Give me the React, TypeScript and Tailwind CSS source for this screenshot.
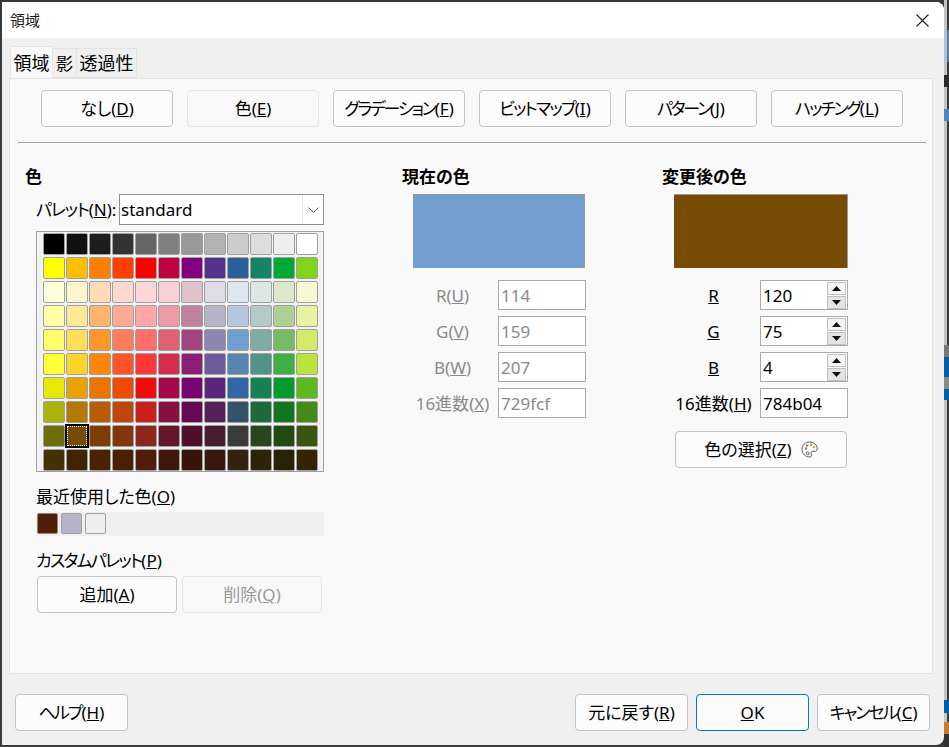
import React from "react";

const PALETTE: string[][] = [
  ["#000000", "#111111", "#1c1c1c", "#333333", "#666666", "#808080", "#999999", "#b2b2b2", "#cccccc", "#dddddd", "#eeeeee", "#ffffff"],
  ["#ffff00", "#ffbf00", "#ff8000", "#ff4000", "#ff0000", "#bf0041", "#800080", "#55308d", "#2a6099", "#158466", "#00a933", "#81d41a"],
  ["#ffffd7", "#fff5ce", "#ffdbb6", "#ffd8ce", "#ffd7d7", "#f7d1d5", "#e0c2cd", "#dedce6", "#dee6ef", "#dee7e5", "#dde8cb", "#f6f9d4"],
  ["#ffffa6", "#ffe994", "#ffb66c", "#ffaa95", "#ffa6a6", "#ec9ba4", "#bf819e", "#b7b3ca", "#b4c7dc", "#b3cac7", "#afd095", "#e8f2a1"],
  ["#ffff6d", "#ffde59", "#ff972f", "#ff7b59", "#ff6d6d", "#e16173", "#a1467e", "#8e86ae", "#729fcf", "#81aca6", "#77bc65", "#d4ea6b"],
  ["#ffff38", "#ffd428", "#ff860d", "#ff5429", "#ff3838", "#d62e4e", "#8d1d75", "#6e5b9b", "#5983b0", "#50938a", "#3faf46", "#bbe33d"],
  ["#e6e905", "#e8a202", "#ea7500", "#ed4c05", "#f10d0c", "#a7074b", "#780373", "#5b277d", "#3465a4", "#168253", "#069a2e", "#5eb91e"],
  ["#acb20c", "#b47804", "#b85c00", "#be480a", "#c9211e", "#861141", "#650953", "#55215b", "#355269", "#1e6a39", "#127622", "#468a1a"],
  ["#706e0c", "#784b04", "#7b3d00", "#813709", "#8d281e", "#611729", "#4e102d", "#481d32", "#383d3c", "#28471f", "#224b12", "#395511"],
  ["#443205", "#3f2402", "#4a2200", "#4b2002", "#511d0a", "#3e160c", "#38120c", "#38180e", "#33220f", "#2c2408", "#2a2206", "#332504"],
];

const SLIVER: { h: number; cls: string }[] = [
  { h: 30, cls: "bg-[#c4c4c4] border-r-2 border-[#3c3c3c]" },
  { h: 32, cls: "bg-[#a8c4e0] border-r-2 border-[#6a7a8a]" },
  { h: 13, cls: "bg-[#c4c4c4] border-r-2 border-[#3c3c3c]" },
  { h: 12, cls: "bg-[#2a2a2a]" },
  { h: 22, cls: "bg-[#c4c4c4] border-r-2 border-[#3c3c3c]" },
  { h: 12, cls: "bg-[#4f86c0]" },
  { h: 224, cls: "bg-[#c4c4c4] border-r-2 border-[#3c3c3c]" },
  { h: 12, cls: "bg-[#777777]" },
  { h: 20, cls: "bg-[#005fa8]" },
  { h: 12, cls: "bg-[#8a8a8a]" },
  { h: 11, cls: "bg-[#005fa8]" },
  { h: 300, cls: "bg-[#c4c4c4] border-r-2 border-[#3c3c3c]" },
  { h: 13, cls: "bg-[#005fa8]" },
  { h: 9, cls: "bg-[#c4c4c4] border-r-2 border-[#3c3c3c]" },
  { h: 12, cls: "bg-[#c08030]" },
  { h: 13, cls: "bg-[#333333]" },
];

function Label({ text, k, after = "", track = "" }: { text: string; k: string; after?: string; track?: string }) {
  return (
    <span className="whitespace-nowrap">
      <span className={track}>{text}</span>(<u>{k}</u>){after}
    </span>
  );
}

function Btn({
  className = "",
  disabled = false,
  pressed = false,
  focused = false,
  children,
}: {
  className?: string;
  disabled?: boolean;
  pressed?: boolean;
  focused?: boolean;
  children: React.ReactNode;
}) {
  const look = focused
    ? "bg-[#fbfbfb] border-[#0078d4] text-black"
    : disabled
      ? "bg-[#f8f8f8] border-[#e5e5e5] text-[#9a9a9a]"
      : pressed
        ? "bg-[#f8f8f8] border-[#e5e5e5] text-black"
        : "bg-[#fcfcfc] border-[#c4c4c4] text-black";
  return (
    <div className={`flex h-[37px] shrink-0 items-center justify-center rounded-[4px] border text-[17px] leading-none ${look} ${className}`}>
      {children}
    </div>
  );
}

function Heading({ children, className = "" }: { children: React.ReactNode; className?: string }) {
  return <div className={`h-[24px] text-[17px] font-bold leading-[24px] text-black ${className}`}>{children}</div>;
}

function Field({ value, disabled = false, spin = false }: { value: string; disabled?: boolean; spin?: boolean }) {
  return (
    <div className={`flex h-[30px] w-[88px] items-center justify-between border border-[#aaaaaa] bg-white pl-[2px] text-[17px] leading-none ${disabled ? "text-[#8a8a8a]" : "text-black"}`}>
      <span>{value}</span>
      {spin && (
        <div className="mr-[1px] flex w-[19px] flex-col gap-[1px]">
          <div className="flex h-[13px] items-center justify-center border border-[#c0c0c0] bg-[#f4f4f4]">
            <svg width="9" height="5" viewBox="0 0 9 5"><path d="M4.5 0 9 5H0z" fill="#111" /></svg>
          </div>
          <div className="flex h-[13px] items-center justify-center border border-[#c0c0c0] bg-[#e4e4e4]">
            <svg width="9" height="5" viewBox="0 0 9 5"><path d="M0 0h9L4.500 5z" fill="#111" /></svg>
          </div>
        </div>
      )}
    </div>
  );
}

function FieldRow({ label, value, disabled = false, spin = false, gapClass }: { label: React.ReactNode; value: string; disabled?: boolean; spin?: boolean; gapClass: string }) {
  return (
    <div className={`flex h-[30px] items-center ${gapClass}`}>
      <div className={`w-[79px] text-center text-[17px] leading-none ${disabled ? "text-[#8a8a8a]" : "text-black"}`}>{label}</div>
      <Field value={value} disabled={disabled} spin={spin} />
    </div>
  );
}

function Swatch({ color, selected = false }: { color: string; selected?: boolean }) {
  return (
    <div className="relative h-[22px] w-[22px] rounded-[2px] border border-[#a0a0a0]" style={{ backgroundColor: color }}>
      {selected && (
        <div className="absolute -inset-[2px] border border-black bg-black p-[1px]">
          <div className="h-full w-full border border-dotted border-white" style={{ backgroundColor: color, outline: "1px solid black", outlineOffset: "0px" }} />
        </div>
      )}
    </div>
  );
}

function PaletteIcon() {
  return (
    <svg width="17" height="17" viewBox="0 0 17 17" fill="none">
      <path d="M8.500 1C4.200 1 1 4.200 1 8.300c0 4.200 3.300 7.700 7.400 7.700 1.500 0 2.300-.9 2.300-1.900 0-1.100-.7-1.500-.7-2.400 0-.9.7-1.400 1.700-1.400h2.100c1.500 0 2.400-1 2.400-2.500C16.200 3.900 12.800 1 8.500 1z" stroke="#555" strokeWidth="1" fill="#fff" />
      <circle cx="5" cy="7.500" r="1.300" fill="#3aa0e0" />
      <circle cx="6.200" cy="4.500" r="1.300" fill="#e8605c" />
      <circle cx="10" cy="3.800" r="1.300" fill="#5cc08a" />
      <circle cx="13" cy="6.300" r="1.300" fill="#f0a840" />
      <circle cx="6.700" cy="12.300" r="1.400" stroke="#555" strokeWidth="1" />
    </svg>
  );
}

export default function App() {
  return (
    <div className="flex h-[747px] w-[949px] overflow-hidden bg-[#3a3a3a] font-['Noto_Sans','Noto_Sans_CJK_JP',sans-serif] [font-feature-settings:'palt']">
      <div className="w-[2px] shrink-0 bg-[#3a3a3a]" />
      <div className="flex w-[942px] shrink-0 flex-col">
        <div className="h-[2px] shrink-0 bg-[#3a3a3a]" />
        <div className="flex h-[743px] flex-col overflow-hidden rounded-tr-[8px] rounded-br-[8px] bg-[#f0f0f0]">
          {/* Title bar */}
          <div className="flex h-[36px] shrink-0 items-center justify-between bg-white pl-[8px] pr-[15px]">
            <span className="text-[15px] leading-none text-[#1a1a1a]">領域</span>
            <svg width="13" height="13" viewBox="0 0 13 13" stroke="#222" strokeWidth="1.100">
              <path d="M.500.500l12 12M12.500.500l-12 12" />
            </svg>
          </div>

          {/* Tabs */}
          <div className="box-content flex h-[32px] shrink-0 items-end pl-[8px] pt-[8px]">
            <div className="flex h-[32px] w-[43px] items-center justify-center rounded-t-[2px] border border-b-0 border-[#e3e3e3] bg-[#f9f9f9] text-[18px] leading-none text-black">領域</div>
            <div className="flex h-[30px] w-[24px] items-center justify-center border-y border-r border-[#e3e3e3] text-[17px] leading-none text-black">影</div>
            <div className="flex h-[30px] w-[60px] items-center justify-center border-y border-r border-[#e3e3e3] text-[18px] leading-none text-black">透過性</div>
          </div>

          {/* Panel */}
          <div className="ml-[7px] flex h-[596px] w-[924px] shrink-0 flex-col border border-[#e3e3e3] bg-[#f9f9f9]">
            <div className="mt-[11px] flex gap-[14px] pl-[31px]">
              <Btn className="w-[132px]"><Label text="なし" k="D" /></Btn>
              <Btn className="w-[132px]" pressed><Label text="色" k="E" /></Btn>
              <Btn className="w-[132px]"><Label text="グラデーション" k="F" track="tracking-[-2.200px]" /></Btn>
              <Btn className="w-[132px]"><Label text="ビットマップ" k="I" track="tracking-[-1.800px]" /></Btn>
              <Btn className="w-[132px]"><Label text="パターン" k="J" track="tracking-[-2.200px]" /></Btn>
              <Btn className="w-[132px]"><Label text="ハッチング" k="L" track="tracking-[-2.200px]" /></Btn>
            </div>
            <div className="ml-[8px] mt-[15px] h-px w-[908px] shrink-0 bg-[#a0a0a0]" />

            <div className="mt-[22px] flex pl-[15px]">
              {/* Left column */}
              <div className="w-[377px] shrink-0">
                <Heading>色</Heading>
                <div className="ml-[11px] mt-[5px] flex h-[31px] w-[288px] items-center justify-between">
                  <span className="w-[83px] shrink-0 text-[17px] leading-none text-black"><Label text="パレット" k="N" after=":" track="tracking-[-1.200px]" /></span>
                  <div className="flex h-[31px] w-[205px] shrink-0 items-center border border-[#8f8f8f] bg-white">
                    <span className="flex-1 pl-[1px] text-[17px] leading-none text-black">standard</span>
                    <div className="flex h-full w-[21px] items-center justify-center border-l border-[#e3e3e3]">
                      <svg width="11" height="6" viewBox="0 0 11 6" fill="none" stroke="#555" strokeWidth="1"><path d="M.500.500l5 5 5-5" /></svg>
                    </div>
                  </div>
                </div>

                <div className="ml-[11px] mt-[6px] flex h-[241px] w-[288px] flex-col gap-[2px] border border-[#a0a0a0] bg-[#f2f2f2] pl-[6px] pt-[1px]">
                  {PALETTE.map((row, r) => (
                    <div key={r} className="flex gap-[1px]">
                      {row.map((c, i) => (
                        <Swatch key={i} color={c} selected={r === 8 && i === 1} />
                      ))}
                    </div>
                  ))}
                </div>

                <div className="ml-[11px] mt-[13px] h-[24px] text-[17px] leading-[24px] text-black"><Label text="最近使用した色" k="O" /></div>
                <div className="ml-[11px] mt-[3px] flex h-[24px] w-[288px] gap-[3px] bg-[#efefef] pl-[1px] pt-[1px]">
                  <div className="h-[21px] w-[21px] rounded-[2px] border border-[#a08070] bg-[#4f1f0b]" />
                  <div className="h-[21px] w-[21px] rounded-[2px] border border-[#a0a0a0] bg-[#b7b3ca]" />
                  <div className="h-[21px] w-[21px] rounded-[2px] border border-[#a0a0a0] bg-[#eeeeee]" />
                </div>

                <div className="ml-[11px] mt-[13px] h-[24px] text-[17px] leading-[24px] text-black"><Label text="カスタムパレット" k="P" track="tracking-[-1.750px]" /></div>
                <div className="ml-[12px] mt-[3px] flex gap-[5px]">
                  <Btn className="w-[140px]"><Label text="追加" k="A" /></Btn>
                  <Btn className="w-[140px]" disabled><Label text="削除" k="Q" /></Btn>
                </div>
              </div>

              {/* Middle column */}
              <div className="w-[260px] shrink-0">
                <Heading>現在の色</Heading>
                <div className="ml-[11px] mt-[5px] h-[74px] w-[172px] border-r border-t border-[#999999] bg-[#729fcf]" />
                <div className="ml-[11px] mt-[12px] flex flex-col gap-[6px]">
                  <FieldRow gapClass="gap-[6px]" label={<Label text="R" k="U" />} value="114" disabled />
                  <FieldRow gapClass="gap-[6px]" label={<Label text="G" k="V" />} value="159" disabled />
                  <FieldRow gapClass="gap-[6px]" label={<Label text="B" k="W" />} value="207" disabled />
                  <FieldRow gapClass="gap-[6px]" label={<Label text="16進数" k="X" />} value="729fcf" disabled />
                </div>
              </div>

              {/* Right column */}
              <div className="w-[200px] shrink-0">
                <Heading>変更後の色</Heading>
                <div className="ml-[12px] mt-[5px] h-[74px] w-[174px] border-r border-t border-[#999999] bg-[#784b04]" />
                <div className="ml-[12px] mt-[12px] flex flex-col gap-[6px]">
                  <FieldRow gapClass="gap-[7px]" label={<u>R</u>} value="120" spin />
                  <FieldRow gapClass="gap-[7px]" label={<u>G</u>} value="75" spin />
                  <FieldRow gapClass="gap-[7px]" label={<u>B</u>} value="4" spin />
                  <FieldRow gapClass="gap-[7px]" label={<Label text="16進数" k="H" />} value="784b04" />
                </div>
                <Btn className="ml-[13px] mt-[13px] w-[172px] gap-[9px]">
                  <Label text="色の選択" k="Z" />
                  <PaletteIcon />
                </Btn>
              </div>
            </div>
          </div>

          {/* Footer */}
          <div className="mt-[20px] flex justify-between pl-[13px] pr-[14px]">
            <Btn className="w-[113px]"><Label text="ヘルプ" k="H" track="tracking-[-2px]" /></Btn>
            <div className="flex gap-[8px]">
              <Btn className="w-[113px]"><Label text="元に戻す" k="R" /></Btn>
              <Btn className="w-[113px]" focused><span><u>O</u>K</span></Btn>
              <Btn className="w-[113px]"><Label text="キャンセル" k="C" track="tracking-[-2px]" /></Btn>
            </div>
          </div>
        </div>
        <div className="h-[2px] shrink-0 bg-[#3a3a3a]" />
      </div>

      {/* Edge of what lies behind the dialog */}
      <div className="flex w-[5px] shrink-0 flex-col">
        {SLIVER.map((s, i) => (
          <div key={i} className={`shrink-0 ${s.cls}`} style={{ height: s.h }} />
        ))}
      </div>
    </div>
  );
}
